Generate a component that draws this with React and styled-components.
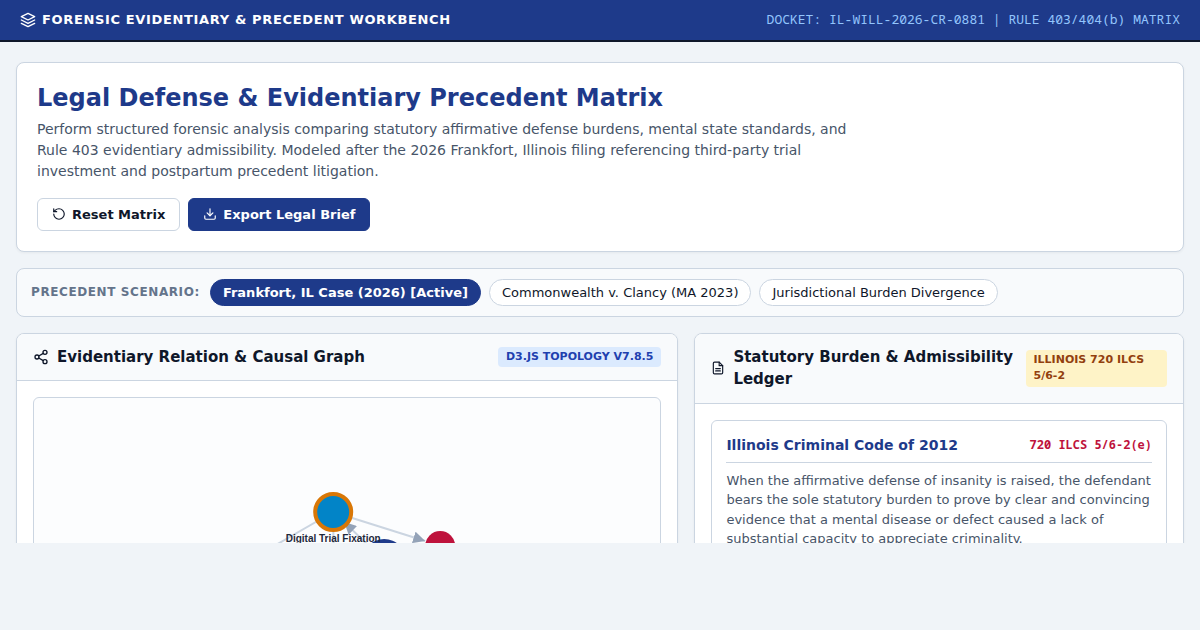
import React, { useState } from 'react';
import styled, { createGlobalStyle } from 'styled-components';

const sans = "'DejaVu Sans', sans-serif";
const mono = "'Noto Sans Mono', 'Liberation Mono', monospace";

const GlobalStyle = createGlobalStyle`
  * {
    box-sizing: border-box;
  }

  body {
    margin: 0;
    background: #f0f4f8;
    color: #0f172a;
    font-family: ${sans};
    line-height: 1.5;
  }
`;

const Page = styled.div`
  display: flex;
  flex-direction: column;
  height: 100vh;
  padding-bottom: 87px;
`;

const TopBar = styled.header`
  flex: none;
  display: flex;
  justify-content: space-between;
  align-items: center;
  padding: 10px 20px;
  background: #1e3a8a;
  border-bottom: 2px solid #0f172a;
  color: #ffffff;
`;

const Brand = styled.div`
  display: flex;
  align-items: center;
  gap: 6px;
  font-size: 13px;
  line-height: 1.5;
  font-weight: 700;
  letter-spacing: 0.05em;
  text-transform: uppercase;
`;

const Docket = styled.div`
  font-family: ${mono};
  font-size: 13px;
  line-height: 1.5;
  color: #93c5fd;
`;

const Icon = styled.svg`
  flex: none;
  width: ${({ $size }) => $size}px;
  height: ${({ $size }) => $size}px;
  fill: none;
  stroke: currentColor;
  stroke-width: 2;
  stroke-linecap: round;
  stroke-linejoin: round;
`;

const Main = styled.main`
  flex: 1;
  min-height: 0;
  overflow: hidden;
  display: flex;
  flex-direction: column;
  gap: 16px;
  padding: 20px 16px 0;
`;

const Hero = styled.section`
  flex: none;
  padding: 20px;
  background: #ffffff;
  border: 1px solid #cbd5e1;
  border-radius: 8px;
  box-shadow: 0 1px 3px rgba(0, 0, 0, 0.05);
`;

const Title = styled.h1`
  margin: 0 0 6px;
  font-size: 24px;
  line-height: 30px;
  font-weight: 700;
  color: #1e3a8a;
`;

const Lead = styled.p`
  max-width: 820px;
  margin: 0;
  font-size: 14px;
  line-height: 21px;
  color: #475569;
`;

const Actions = styled.div`
  display: flex;
  gap: 8px;
  margin-top: 16px;
`;

const Button = styled.button`
  display: inline-flex;
  align-items: center;
  gap: 6px;
  padding: 8px 14px;
  border: 1px solid ${({ $primary }) => ($primary ? '#1e3a8a' : '#cbd5e1')};
  border-radius: 6px;
  background: ${({ $primary }) => ($primary ? '#1e3a8a' : '#ffffff')};
  color: ${({ $primary }) => ($primary ? '#ffffff' : '#0f172a')};
  font-family: inherit;
  font-size: 13px;
  line-height: 15px;
  font-weight: 600;
  cursor: pointer;
`;

const ScenarioBar = styled.section`
  flex: none;
  display: flex;
  flex-wrap: wrap;
  align-items: center;
  gap: 8px;
  padding: 10px 14px;
  background: #f8fafc;
  border: 1px solid #cbd5e1;
  border-radius: 8px;
`;

const ScenarioLabel = styled.span`
  margin-right: 2px;
  font-size: 12px;
  line-height: 18px;
  font-weight: 700;
  letter-spacing: 0.05em;
  text-transform: uppercase;
  color: #64748b;
`;

const Pill = styled.button`
  padding: 5px 12px;
  border: 1px solid ${({ $active }) => ($active ? '#1e3a8a' : '#cbd5e1')};
  border-radius: 20px;
  background: ${({ $active }) => ($active ? '#1e3a8a' : '#ffffff')};
  color: ${({ $active }) => ($active ? '#ffffff' : '#0f172a')};
  font-family: inherit;
  font-size: 13px;
  line-height: 15px;
  font-weight: ${({ $active }) => ($active ? 600 : 400)};
  cursor: pointer;
`;

const Columns = styled.div`
  flex: none;
  display: grid;
  grid-template-columns: 1.15fr 0.85fr;
  align-items: start;
  gap: 16px;
`;

const Panel = styled.section`
  background: #ffffff;
  border: 1px solid #cbd5e1;
  border-radius: 8px;
  box-shadow: 0 1px 3px rgba(0, 0, 0, 0.05);
  overflow: hidden;
`;

const PanelHead = styled.div`
  display: flex;
  justify-content: space-between;
  align-items: center;
  padding: 12px 16px;
  background: #f8fafc;
  border-bottom: 1px solid #cbd5e1;
`;

const PanelTitle = styled.h2`
  display: flex;
  align-items: center;
  gap: 8px;
  margin: 0;
  font-size: 15px;
  line-height: 1.5;
  font-weight: 700;
`;

const Tag = styled.span`
  padding: 2px 8px;
  border-radius: 4px;
  background: ${({ $tone }) => ($tone === 'amber' ? '#fef3c7' : '#dbeafe')};
  color: ${({ $tone }) => ($tone === 'amber' ? '#92400e' : '#1e40af')};
  font-size: 11px;
  line-height: 1.5;
  font-weight: 700;
  text-transform: uppercase;
`;

const PanelBody = styled.div`
  padding: 16px;
`;

const Graph = styled.div`
  height: 420px;
  background: #fcfdfe;
  border: 1px solid #cbd5e1;
  border-radius: 6px;
  overflow: hidden;

  svg {
    display: block;
    width: 100%;
    height: 100%;
  }

  text {
    font-family: 'Liberation Sans', Arial, sans-serif;
    font-size: 10px;
    font-weight: 700;
    fill: #1e293b;
    text-anchor: middle;
  }
`;

const Statute = styled.article`
  padding: 14px;
  border: 1px solid #cbd5e1;
  border-radius: 6px;
`;

const StatuteHead = styled.div`
  display: flex;
  justify-content: space-between;
  align-items: center;
  padding-bottom: 6px;
  margin-bottom: 8px;
  border-bottom: 1px solid #cbd5e1;
`;

const StatuteTitle = styled.h3`
  margin: 0;
  font-size: 14px;
  line-height: 21px;
  font-weight: 700;
  color: #1e3a8a;
`;

const Citation = styled.span`
  font-family: ${mono};
  font-size: 12px;
  line-height: 18px;
  font-weight: 700;
  color: #be123c;
`;

const StatuteText = styled.p`
  margin: 0;
  font-size: 13px;
  line-height: 1.5;
  color: #475569;
`;

const LayersIcon = () => (
  <Icon $size={16} viewBox="0 0 24 24" aria-hidden="true">
    <path d="M12 2 2 7l10 5 10-5-10-5z" />
    <path d="m2 17 10 5 10-5" />
    <path d="m2 12 10 5 10-5" />
  </Icon>
);

const ResetIcon = () => (
  <Icon $size={14} viewBox="0 0 24 24" aria-hidden="true">
    <path d="M3 12a9 9 0 1 0 9-9 9.75 9.75 0 0 0-6.74 2.74L3 8" />
    <path d="M3 3v5h5" />
  </Icon>
);

const ExportIcon = () => (
  <Icon $size={14} viewBox="0 0 24 24" aria-hidden="true">
    <path d="M21 15v4a2 2 0 0 1-2 2H5a2 2 0 0 1-2-2v-4" />
    <path d="m7 10 5 5 5-5" />
    <path d="M12 15V3" />
  </Icon>
);

const ShareIcon = () => (
  <Icon $size={16} viewBox="0 0 24 24" aria-hidden="true">
    <circle cx="18" cy="5" r="3" />
    <circle cx="6" cy="12" r="3" />
    <circle cx="18" cy="19" r="3" />
    <path d="m8.59 13.51 6.83 3.98M15.41 6.51l-6.82 3.98" />
  </Icon>
);

const FileIcon = () => (
  <Icon $size={14} viewBox="0 0 24 24" aria-hidden="true">
    <path d="M14 2H6a2 2 0 0 0-2 2v16a2 2 0 0 0 2 2h12a2 2 0 0 0 2-2V8z" />
    <path d="M14 2v6h6M16 13H8M16 17H8" />
  </Icon>
);

const scenarios = [
  'Frankfort, IL Case (2026)',
  'Commonwealth v. Clancy (MA 2023)',
  'Jurisdictional Burden Divergence',
];

const RelationGraph = () => (
  <Graph>
    <svg viewBox="0 0 626 418" role="img" aria-label="Evidentiary relation graph">
      <defs>
        <marker id="arrow" viewBox="0 -5 10 10" refX="10" refY="0" markerUnits="userSpaceOnUse" markerWidth="12" markerHeight="12" orient="auto">
          <path d="M0,-5L10,0L0,5" fill="#94a3b8" />
        </marker>
      </defs>
      <g stroke="#cbd5e1" strokeWidth="2">
        <line x1="299" y1="114" x2="200" y2="171" />
        <line x1="299" y1="114" x2="300" y2="220" />
        <line x1="299" y1="114" x2="391" y2="143" markerEnd="url(#arrow)" />
        <line x1="350" y1="163" x2="310" y2="124" markerEnd="url(#arrow)" />
      </g>
      <circle cx="299" cy="114" r="18" fill="#0284c7" stroke="#d97706" strokeWidth="4" />
      <circle cx="350" cy="163" r="22" fill="#1e3a8a" />
      <circle cx="406" cy="148" r="15" fill="#be123c" />
      <text x="299" y="144">Digital Trial Fixation</text>
    </svg>
  </Graph>
);

const App = () => {
  const [active, setActive] = useState(0);

  return (
    <>
      <GlobalStyle />
      <Page>
        <TopBar>
          <Brand>
            <LayersIcon />
            Forensic Evidentiary &amp; Precedent Workbench
          </Brand>
          <Docket>DOCKET: IL-WILL-2026-CR-0881 | RULE 403/404(b) MATRIX</Docket>
        </TopBar>
        <Main>
          <Hero>
            <Title>Legal Defense &amp; Evidentiary Precedent Matrix</Title>
            <Lead>
              Perform structured forensic analysis comparing statutory affirmative defense burdens,
              mental state standards, and Rule 403 evidentiary admissibility. Modeled after the 2026
              Frankfort, Illinois filing referencing third-party trial investment and postpartum
              precedent litigation.
            </Lead>
            <Actions>
              <Button type="button" onClick={() => setActive(0)}>
                <ResetIcon />
                Reset Matrix
              </Button>
              <Button type="button" $primary>
                <ExportIcon />
                Export Legal Brief
              </Button>
            </Actions>
          </Hero>
          <ScenarioBar>
            <ScenarioLabel>Precedent Scenario:</ScenarioLabel>
            {scenarios.map((name, i) => (
              <Pill key={name} type="button" $active={i === active} onClick={() => setActive(i)}>
                {i === active ? `${name} [Active]` : name}
              </Pill>
            ))}
          </ScenarioBar>
          <Columns>
            <Panel>
              <PanelHead>
                <PanelTitle>
                  <ShareIcon />
                  Evidentiary Relation &amp; Causal Graph
                </PanelTitle>
                <Tag>D3.js Topology v7.8.5</Tag>
              </PanelHead>
              <PanelBody>
                <RelationGraph />
              </PanelBody>
            </Panel>
            <Panel>
              <PanelHead>
                <PanelTitle>
                  <FileIcon />
                  Statutory Burden &amp; Admissibility Ledger
                </PanelTitle>
                <Tag $tone="amber">Illinois 720 ILCS 5/6-2</Tag>
              </PanelHead>
              <PanelBody>
                <Statute>
                  <StatuteHead>
                    <StatuteTitle>Illinois Criminal Code of 2012</StatuteTitle>
                    <Citation>720 ILCS 5/6-2(e)</Citation>
                  </StatuteHead>
                  <StatuteText>
                    When the affirmative defense of insanity is raised, the defendant bears the sole
                    statutory burden to prove by clear and convincing evidence that a mental disease
                    or defect caused a lack of substantial capacity to appreciate criminality.
                  </StatuteText>
                </Statute>
              </PanelBody>
            </Panel>
          </Columns>
        </Main>
      </Page>
    </>
  );
};

export default App;
